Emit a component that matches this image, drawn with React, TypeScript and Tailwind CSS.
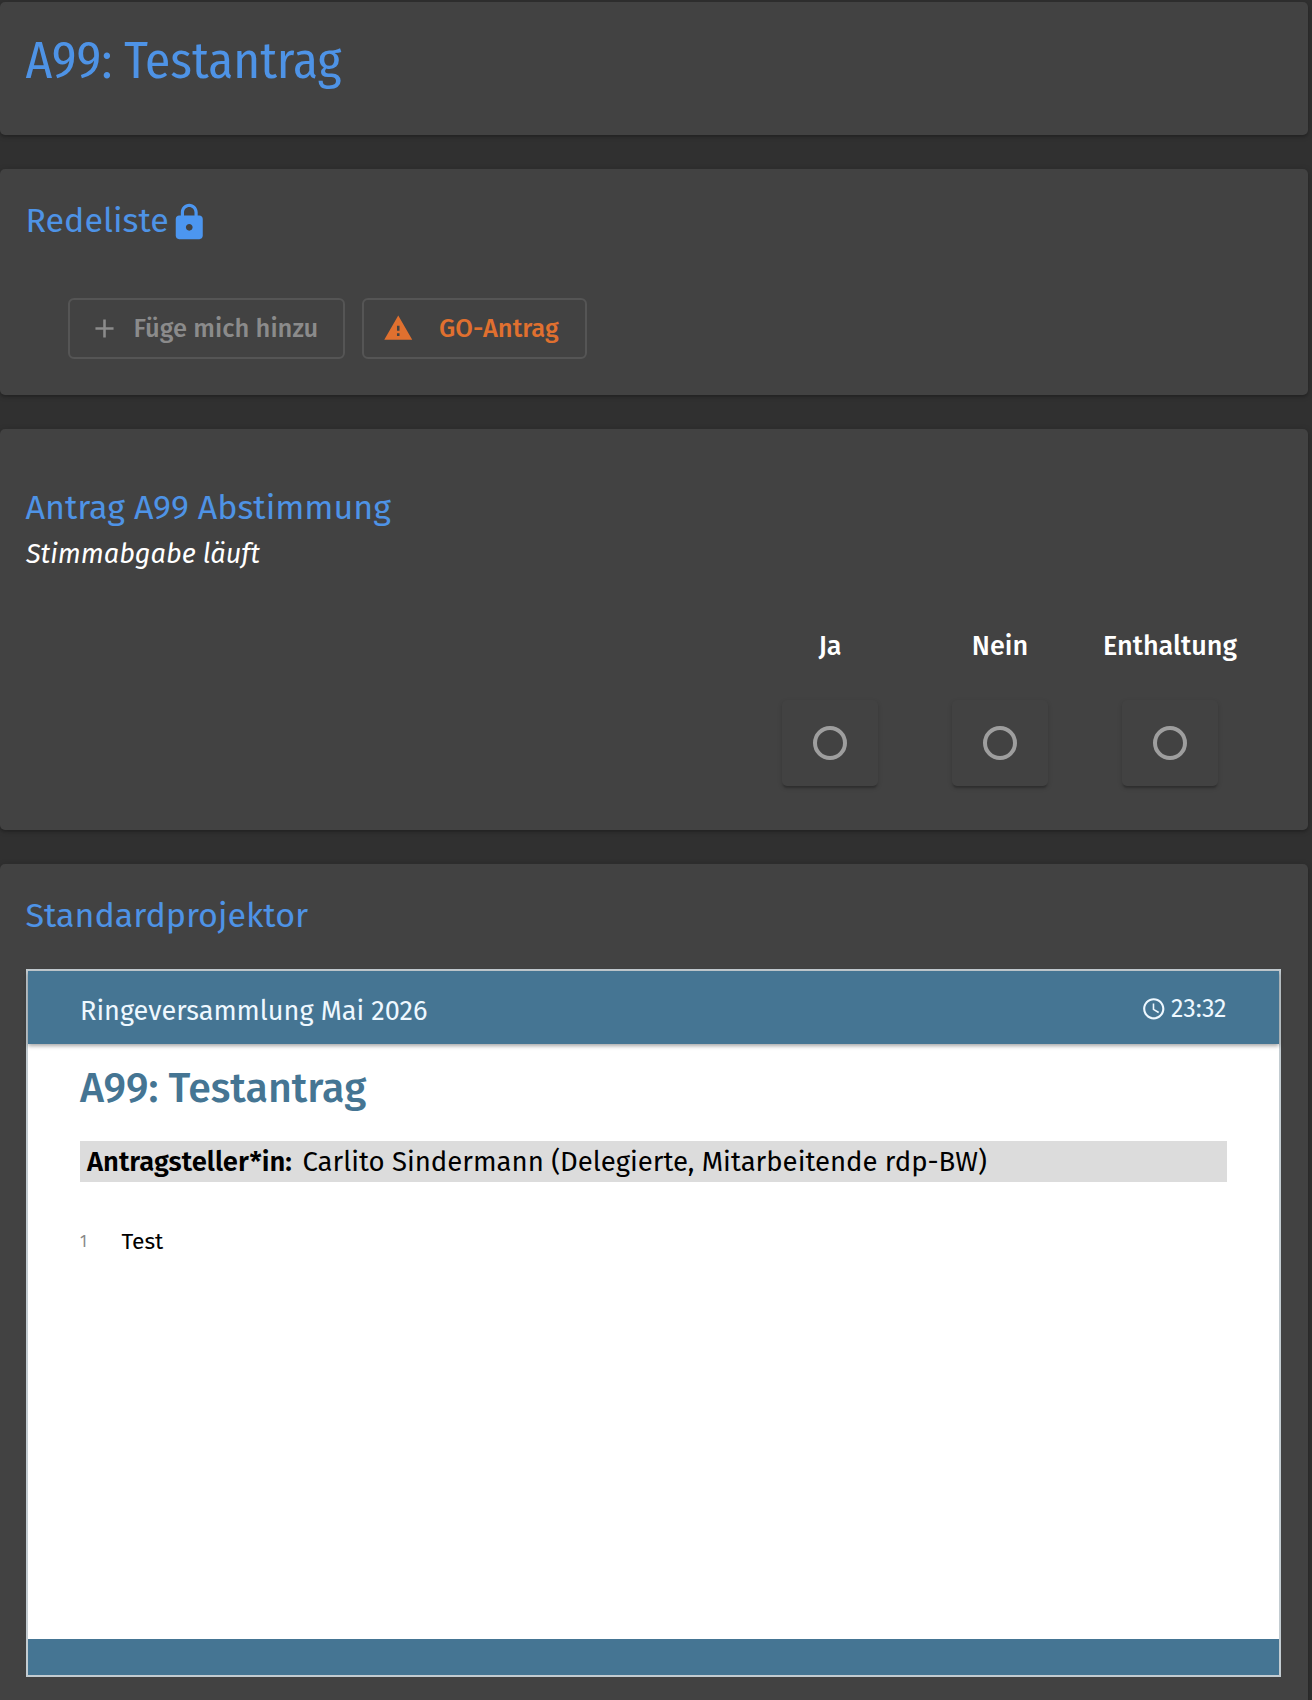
import type { ReactNode } from "react";

const icons = {
  lock: "M18 8h-1V6c0-2.76-2.24-5-5-5S7 3.24 7 6v2H6c-1.1 0-2 .9-2 2v10c0 1.1.9 2 2 2h12c1.1 0 2-.9 2-2V10c0-1.1-.9-2-2-2zm-6 9c-1.1 0-2-.9-2-2s.9-2 2-2 2 .9 2 2-.9 2-2 2zm3.1-9H8.9V6c0-1.71 1.39-3.1 3.1-3.1 1.71 0 3.1 1.39 3.1 3.1v2z",
  add: "M19 13h-6v6h-2v-6H5v-2h6V5h2v6h6v2z",
  warning: "M1 21h22L12 2 1 21zm12-3h-2v-2h2v2zm0-4h-2v-4h2v4z",
  clock:
    "M11.99 2C6.47 2 2 6.48 2 12s4.47 10 9.99 10C17.52 22 22 17.52 22 12S17.52 2 11.99 2zM12 20c-4.42 0-8-3.58-8-8s3.58-8 8-8 8 3.58 8 8-3.58 8-8 8zm.5-13H11v6l5.25 3.15.75-1.23-4.5-2.67z",
};

function Icon({ name, className }: { name: keyof typeof icons; className: string }) {
  return (
    <svg viewBox="0 0 24 24" fill="currentColor" className={`shrink-0 ${className}`}>
      <path d={icons[name]} />
    </svg>
  );
}

function Card({ className, children }: { className: string; children?: ReactNode }) {
  return (
    <section
      className={`rounded-[5px] bg-[#424242] px-[25.5px] shadow-[0_2px_2px_rgba(0,0,0,0.14),0_1px_6px_rgba(0,0,0,0.2)] ${className}`}
    >
      {children}
    </section>
  );
}

function CardTitle({ children }: { children: ReactNode }) {
  return <h2 className="text-[34px] leading-[40px] whitespace-nowrap text-[#4e93e6]">{children}</h2>;
}

function VoteOption({ label }: { label: string }) {
  return (
    <div className="flex w-[170px] flex-col items-center">
      <span className="text-[27px] leading-[34px] font-medium">{label}</span>
      <button className="mt-[37px] flex h-[86px] w-[96px] items-center justify-center rounded-[5px] bg-[#424242] shadow-[0_3px_2px_-1px_rgba(0,0,0,0.2),0_2px_5px_rgba(0,0,0,0.14)]">
        <span className="size-[34px] rounded-full border-4 border-[#9e9e9e]" />
      </button>
    </div>
  );
}

function Projector() {
  return (
    <div className="mt-[33px] ml-[0.5px] flex h-[708px] w-[1254.5px] flex-col border-2 border-[#c3ccd1] bg-white text-black">
      <header className="flex h-[73px] shrink-0 items-start justify-between bg-[#457593] pr-[52px] pl-[52px] text-[#eef8ff] shadow-[0_2px_4px_rgba(0,0,0,0.35)]">
        <span className="mt-[23px] text-[27.1px] leading-[34px]">Ringeversammlung Mai 2026</span>
        <span className="mt-[23px] flex items-center gap-[4.5px]">
          <Icon name="clock" className="size-[25.5px]" />
          <span className="text-[25px] leading-[30px]">23:32</span>
        </span>
      </header>
      <div className="flex-1 pr-[52px] pl-[52px]">
        <h1 className="mt-[18.5px] text-[41.2px] leading-[50px] font-medium text-[#457593]">A99: Testantrag</h1>
        <div className="mt-[28.5px] flex h-[41px] items-center gap-[10.5px] bg-[#dcdcdc] pl-[7px] leading-[34px] whitespace-nowrap">
          <span className="text-[27.4px] font-semibold">Antragsteller*in:</span>
          <span className="text-[27.55px]">Carlito Sindermann (Delegierte, Mitarbeitende rdp-BW)</span>
        </div>
        <div className="mt-[44px] flex items-center leading-[30px]">
          <span className="w-[41.5px] pt-px text-[16px] text-[#888888]">1</span>
          <span className="text-[22.8px]">Test</span>
        </div>
      </div>
      <footer className="h-[36px] shrink-0 bg-[#457593]" />
    </div>
  );
}

export default function App() {
  return (
    <main className="flex h-[1700px] flex-col gap-[34px] overflow-hidden bg-[#303030] pt-[2px] pr-[4px] font-['Fira_Sans','Open_Sans',sans-serif] text-white">
      <Card className="h-[133px] shrink-0 pt-[29px]">
        <h1 className="font-['Fira_Sans_Condensed','Fira_Sans','Open_Sans',sans-serif] text-[51px] leading-[60px] text-[#4e93e6]">
          A99: Testantrag
        </h1>
      </Card>

      <Card className="h-[226px] shrink-0 pt-[32px]">
        <div className="flex h-[40px] items-start">
          <CardTitle>Redeliste</CardTitle>
          <Icon name="lock" className="mt-[0.5px] size-[40.5px] text-[#4c96f0]" />
        </div>
        <div className="mt-[57px] ml-[42.5px] flex gap-[17px] text-[25.5px] font-medium whitespace-nowrap">
          <button className="flex h-[61px] w-[277px] items-center gap-[14px] rounded-[6px] border-2 border-[#555555] pl-[18.5px] text-[#8b8b8b]">
            <Icon name="add" className="size-[31px]" />
            <span className="pt-[2px]">Füge mich hinzu</span>
          </button>
          <button className="flex h-[61px] w-[225px] items-center gap-[26px] rounded-[6px] border-2 border-[#555555] pl-[18.5px] text-[#e0702f]">
            <Icon name="warning" className="size-[30.5px]" />
            <span className="pt-[2px]">GO-Antrag</span>
          </button>
        </div>
      </Card>

      <Card className="h-[401px] shrink-0 pt-[59px]">
        <CardTitle>Antrag A99 Abstimmung</CardTitle>
        <p className="mt-[9px] ml-[0.5px] text-[27.1px] leading-[34px] italic">Stimmabgabe läuft</p>
        <div className="mt-[58px] mr-[27.5px] flex justify-end">
          <VoteOption label="Ja" />
          <VoteOption label="Nein" />
          <VoteOption label="Enthaltung" />
        </div>
      </Card>

      <Card className="h-[860px] shrink-0 pt-[32px]">
        <CardTitle>Standardprojektor</CardTitle>
        <Projector />
      </Card>
    </main>
  );
}
